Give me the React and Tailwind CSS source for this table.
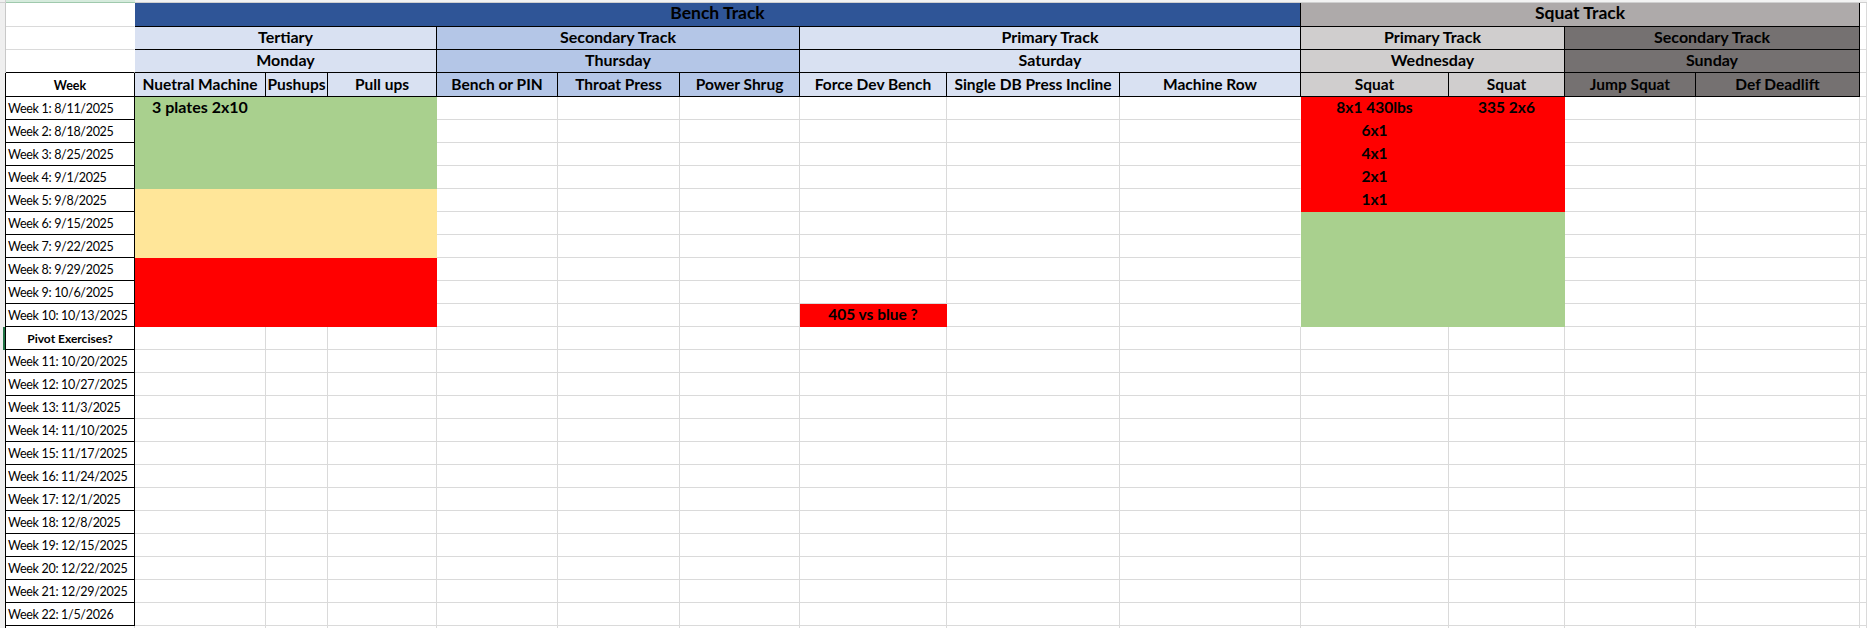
import React from 'react';

const GRID = 'border-[#dadada]';
const BLACK = 'border-black';
const HEAD = 'text-[15.5px] font-bold';
const TRACK = 'text-[16px] font-bold';

const fills = {
  green: 'bg-[#a9d08e] border-[#a9d08e]',
  yellow: 'bg-[#ffe699] border-[#ffe699]',
  red: 'bg-[#ff0000] border-[#ff0000]',
};

const Cell = ({ className = '', children }) => (
  <div className={`flex items-end justify-center overflow-hidden whitespace-nowrap border-r border-b pb-[4px] leading-none ${className}`}>
    {children}
  </div>
);

const weeks = [
  'Week 1: 8/11/2025',
  'Week 2: 8/18/2025',
  'Week 3: 8/25/2025',
  'Week 4: 9/1/2025',
  'Week 5: 9/8/2025',
  'Week 6: 9/15/2025',
  'Week 7: 9/22/2025',
  'Week 8: 9/29/2025',
  'Week 9: 10/6/2025',
  'Week 10: 10/13/2025',
];

const laterWeeks = [
  'Week 11: 10/20/2025',
  'Week 12: 10/27/2025',
  'Week 13: 11/3/2025',
  'Week 14: 11/10/2025',
  'Week 15: 11/17/2025',
  'Week 16: 11/24/2025',
  'Week 17: 12/1/2025',
  'Week 18: 12/8/2025',
  'Week 19: 12/15/2025',
  'Week 20: 12/22/2025',
  'Week 21: 12/29/2025',
  'Week 22: 1/5/2026',
];

const exercises = [
  'Nuetral Machine', 'Pushups', 'Pull ups',
  'Bench or PIN', 'Throat Press', 'Power Shrug',
  'Force Dev Bench', 'Single DB Press Incline', 'Machine Row',
];

const squatText = ['8x1 430lbs', '6x1', '4x1', '2x1', '1x1'];

const WeekLabel = ({ children }) => (
  <Cell className={`${BLACK} justify-start pl-[2px] text-[12.5px] tracking-[-0.3px]`}>{children}</Cell>
);

const EmptyRow = ({ label }) => (
  <>
    <WeekLabel>{label}</WeekLabel>
    {Array.from({ length: 13 }).map((_, i) => (
      <Cell key={i} className={GRID} />
    ))}
    <Cell className={GRID} />
  </>
);

const DataRow = ({ label, i }) => {
  const bench = i < 4 ? fills.green : i < 7 ? fills.yellow : fills.red;
  const squat = i < 5 ? fills.red : fills.green;
  return (
    <>
      <WeekLabel>{label}</WeekLabel>
      <Cell className={`${bench} font-bold text-[16px] pb-[3px]`}>{i === 0 ? '3 plates 2x10' : ''}</Cell>
      <Cell className={bench} />
      <Cell className={bench} />
      <Cell className={GRID} />
      <Cell className={GRID} />
      <Cell className={GRID} />
      {i === 9 ? (
        <Cell className={`${fills.red} ${HEAD}`}>405 vs blue ?</Cell>
      ) : (
        <Cell className={GRID} />
      )}
      <Cell className={GRID} />
      <Cell className={i < 10 ? 'border-white border-b-[#dadada]' : GRID} />
      <Cell className={`${squat} ${HEAD}`}>{squatText[i] || ''}</Cell>
      <Cell className={`${squat} ${HEAD}`}>{i === 0 ? '335 2x6' : ''}</Cell>
      <Cell className={GRID} />
      <Cell className={GRID} />
      <Cell className={GRID} />
    </>
  );
};

const ColumnStrip = () => (
  <div className="flex h-[3px]">
    <div className="w-[6px] shrink-0 border-b border-r border-[#d0d0d0] bg-[#efefef]" />
    <div className="w-[129px] shrink-0 border-b border-[#9fc9ad] bg-[#d6ebdd]" />
    <div className="flex-1 border-b border-[#d0d0d0] bg-[#f3f3f3]" />
  </div>
);

const RowStrip = () => (
  <div className="flex w-[6px] shrink-0 flex-col bg-[#efefef]">
    <div className="h-[70px] shrink-0 border-r border-[#c8c8c8]" />
    <div className="h-[254px] shrink-0 border-r border-black" />
    <div className="flex h-[23px] shrink-0 justify-end border-r border-black">
      <div className="w-[2px] bg-[#217346]" />
    </div>
    <div className="flex-1 border-r border-black" />
  </div>
);

export default function App() {
  return (
    <div className="h-[628px] w-[1867px] overflow-hidden bg-white font-['Lato','Liberation_Sans',sans-serif] text-black">
      <ColumnStrip />
      <div className="flex">
        <RowStrip />
        <div className="grid grid-cols-[129px_131px_62px_109px_121px_122px_120px_147px_173px_181px_148px_116px_131px_164px_7px] grid-rows-[24px_23px_23px_24px_repeat(24,23px)]">
          {/* row 1 */}
          <Cell className={`${GRID} border-r-white`} />
          <Cell className={`col-span-9 ${BLACK} bg-[#2f5597] text-[17.5px] font-bold pb-[5px]`}>Bench Track</Cell>
          <Cell className={`col-span-4 ${BLACK} bg-[#aeaaaa] text-[17.5px] font-bold pb-[5px]`}>Squat Track</Cell>
          <Cell className={GRID} />

          {/* row 2 */}
          <Cell className={`${GRID} border-r-white`} />
          <Cell className={`col-span-3 ${BLACK} bg-[#d9e1f2] ${TRACK}`}>Tertiary</Cell>
          <Cell className={`col-span-3 ${BLACK} bg-[#b4c6e7] ${TRACK}`}>Secondary Track</Cell>
          <Cell className={`col-span-3 ${BLACK} bg-[#d9e1f2] ${TRACK}`}>Primary Track</Cell>
          <Cell className={`col-span-2 ${BLACK} bg-[#d0cece] ${TRACK}`}>Primary Track</Cell>
          <Cell className={`col-span-2 ${BLACK} bg-[#757171] ${TRACK}`}>Secondary Track</Cell>
          <Cell className={GRID} />

          {/* row 3 */}
          <Cell className={`${BLACK} border-r-white`} />
          <Cell className={`col-span-3 ${BLACK} bg-[#d9e1f2] ${TRACK}`}>Monday</Cell>
          <Cell className={`col-span-3 ${BLACK} bg-[#b4c6e7] ${TRACK}`}>Thursday</Cell>
          <Cell className={`col-span-3 ${BLACK} bg-[#d9e1f2] ${TRACK}`}>Saturday</Cell>
          <Cell className={`col-span-2 ${BLACK} bg-[#d0cece] ${TRACK}`}>Wednesday</Cell>
          <Cell className={`col-span-2 ${BLACK} bg-[#757171] ${TRACK}`}>Sunday</Cell>
          <Cell className={GRID} />

          {/* row 4 */}
          <Cell className={`${BLACK} text-[12.5px] font-bold`}>Week</Cell>
          {exercises.slice(0, 3).map((e) => (
            <Cell key={e} className={`${BLACK} bg-[#d9e1f2] ${HEAD}`}>{e}</Cell>
          ))}
          {exercises.slice(3, 6).map((e) => (
            <Cell key={e} className={`${BLACK} bg-[#b4c6e7] ${HEAD}`}>{e}</Cell>
          ))}
          {exercises.slice(6).map((e) => (
            <Cell key={e} className={`${BLACK} bg-[#d9e1f2] ${HEAD}`}>{e}</Cell>
          ))}
          <Cell className={`${BLACK} bg-[#d0cece] ${HEAD}`}>Squat</Cell>
          <Cell className={`${BLACK} bg-[#d0cece] ${HEAD}`}>Squat</Cell>
          <Cell className={`${BLACK} bg-[#757171] ${HEAD}`}>Jump Squat</Cell>
          <Cell className={`${BLACK} bg-[#757171] ${HEAD}`}>Def Deadlift</Cell>
          <Cell className={GRID} />

          {weeks.map((w, i) => (
            <DataRow key={w} label={w} i={i} />
          ))}

          <Cell className={`${BLACK} text-[12px] font-bold`}>Pivot Exercises?</Cell>
          {Array.from({ length: 14 }).map((_, i) => (
            <Cell key={i} className={GRID} />
          ))}

          {laterWeeks.map((w) => (
            <EmptyRow key={w} label={w} />
          ))}
          {Array.from({ length: 15 }).map((_, i) => (
            <Cell key={i} className={GRID} />
          ))}
        </div>
      </div>
    </div>
  );
}
